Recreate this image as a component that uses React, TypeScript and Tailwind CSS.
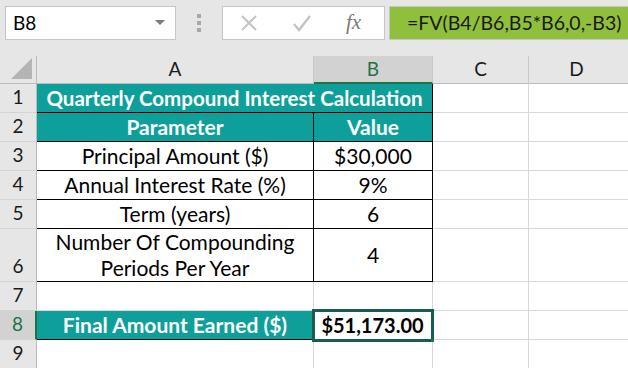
import React from "react";

const font = { fontFamily: "Lato, 'Open Sans', sans-serif" };

const rows = [
  { n: "1", h: "h-[29px]" },
  { n: "2", h: "h-[29px]" },
  { n: "3", h: "h-[29px]" },
  { n: "4", h: "h-[29px]" },
  { n: "5", h: "h-[29px]" },
  { n: "6", h: "h-[53px]" },
  { n: "7", h: "h-[29px]" },
  { n: "8", h: "h-[29px]" },
  { n: "9", h: "h-[29px]" },
];

const params = [
  { label: "Principal Amount ($)", value: "$30,000" },
  { label: "Annual Interest Rate (%)", value: "9%" },
  { label: "Term (years)", value: "6" },
];

function RowHead({ n, h, active }: { n: string; h: string; active?: boolean }) {
  return (
    <div
      className={`${h} w-[37px] shrink-0 flex items-end justify-center pb-[1px] border-b border-[#d4d4d4] text-[19px] ${
        active
          ? "bg-[#d2d2d2] border-r-2 border-r-[#217346] text-[#217346]"
          : "bg-[#e6e6e6] border-r border-r-[#bcbcbc] text-[#1a1a1a]"
      }`}
    >
      {n}
    </div>
  );
}

function Empty({ w }: { w: string }) {
  return <div className={`${w} shrink-0 border-r border-b border-[#d9d9d9]`} />;
}

export default function App() {
  return (
    <div className="w-[628px] h-[368px] overflow-hidden bg-white text-black" style={font}>
      {/* formula bar */}
      <div className="h-[56px] bg-[#e6e6e6] flex items-start pt-[6px] pl-[5px]">
        <div className="w-[171px] h-[34px] bg-white border border-[#c6c6c6] flex items-center pl-[7px] pr-[10px]">
          <span className="text-[19px] flex-1">B8</span>
          <svg width="10" height="6" viewBox="0 0 10 6">
            <path d="M0 0h10L5 5z" fill="#7a7a7a" />
          </svg>
        </div>
        <div className="w-[46px] h-[34px] flex flex-col items-center justify-center gap-[3px]">
          <span className="w-[4px] h-[4px] bg-[#a8a8a8]" />
          <span className="w-[4px] h-[4px] bg-[#a8a8a8]" />
          <span className="w-[4px] h-[4px] bg-[#a8a8a8]" />
        </div>
        <div className="w-[163px] h-[34px] bg-white border border-[#c6c6c6] flex items-center">
          <svg className="ml-[17px]" width="18" height="18" viewBox="0 0 18 18">
            <path d="M2 2l14 14M16 2L2 16" stroke="#c4c4c4" strokeWidth="2" />
          </svg>
          <svg className="ml-[34px]" width="20" height="18" viewBox="0 0 20 18">
            <path d="M2 10l5 6L18 2" stroke="#c4c4c4" strokeWidth="2.4" fill="none" />
          </svg>
          <span
            className="ml-[34px] text-[21px] italic text-[#7a7a7a]"
            style={{ fontFamily: "'Liberation Serif', serif" }}
          >
            fx
          </span>
        </div>
        <div className="ml-[4px] flex-1 h-[34px] bg-[#90bf3c] border border-[#c6c6c6] border-r-0 flex items-center pl-[17px] text-[19.5px] text-[#1a1a1a]">
          =FV(B4/B6,B5*B6,0,-B3)
        </div>
      </div>

      {/* column headers */}
      <div className="h-[28px] flex bg-[#e6e6e6] text-[19px] text-[#1a1a1a]">
        <div className="w-[37px] shrink-0 border-r border-b border-[#bcbcbc] flex items-end justify-end pr-[4px] pb-[4px]">
          <svg width="21" height="21" viewBox="0 0 21 21">
            <path d="M21 0V21H0z" fill="#b4b4b4" />
          </svg>
        </div>
        <div className="w-[277px] shrink-0 border-r border-[#c8c8c8] border-b border-b-[#bcbcbc] flex items-center justify-center">
          A
        </div>
        <div className="w-[119px] shrink-0 bg-[#d2d2d2] border-r border-[#c8c8c8] border-b-2 border-b-[#217346] flex items-center justify-center text-[#217346]">
          B
        </div>
        <div className="w-[96px] shrink-0 border-r border-[#c8c8c8] border-b border-b-[#bcbcbc] flex items-center justify-center">
          C
        </div>
        <div className="flex-1 border-b border-[#bcbcbc] flex items-center justify-center pr-[4px]">D</div>
      </div>

      {/* row 1 */}
      <div className="flex text-[21px]">
        <RowHead n="1" h={rows[0].h} />
        <div className="h-[29px] w-[396px] shrink-0 bg-[#0e9f9b] border-b border-r border-black flex items-center justify-center text-white font-bold text-[20.5px]">
          Quarterly Compound Interest Calculation
        </div>
        <Empty w="w-[96px]" />
        <div className="flex-1 border-b border-[#d9d9d9]" />
      </div>

      {/* row 2 */}
      <div className="flex text-[21px]">
        <RowHead n="2" h={rows[1].h} />
        <div className="h-[29px] w-[277px] shrink-0 bg-[#0e9f9b] border-b border-r border-black flex items-center justify-center text-white font-bold">
          Parameter
        </div>
        <div className="h-[29px] w-[119px] shrink-0 bg-[#0e9f9b] border-b border-r border-black flex items-center justify-center text-white font-bold">
          Value
        </div>
        <Empty w="w-[96px]" />
        <div className="flex-1 border-b border-[#d9d9d9]" />
      </div>

      {params.map((p, i) => (
        <div key={p.label} className="flex text-[21px]">
          <RowHead n={rows[i + 2].n} h={rows[i + 2].h} />
          <div className="h-[29px] w-[277px] shrink-0 border-b border-r border-black flex items-center justify-center">
            {p.label}
          </div>
          <div className="h-[29px] w-[119px] shrink-0 border-b border-r border-black flex items-center justify-center">
            {p.value}
          </div>
          <Empty w="w-[96px]" />
          <div className="flex-1 border-b border-[#d9d9d9]" />
        </div>
      ))}

      {/* row 6 */}
      <div className="flex text-[21px]">
        <RowHead n="6" h={rows[5].h} />
        <div className="h-[53px] w-[277px] shrink-0 border-b border-r border-black flex flex-col items-center justify-center leading-[26px]">
          <span>Number Of Compounding</span>
          <span>Periods Per Year</span>
        </div>
        <div className="h-[53px] w-[119px] shrink-0 border-b border-r border-black flex items-center justify-center">
          4
        </div>
        <Empty w="w-[96px]" />
        <div className="flex-1 border-b border-[#d9d9d9]" />
      </div>

      {/* row 7 */}
      <div className="flex text-[21px]">
        <RowHead n="7" h={rows[6].h} />
        <Empty w="w-[277px]" />
        <Empty w="w-[119px]" />
        <Empty w="w-[96px]" />
        <div className="flex-1 border-b border-[#d9d9d9]" />
      </div>

      {/* row 8 */}
      <div className="flex text-[21px]">
        <RowHead n="8" h={rows[7].h} active />
        <div className="h-[29px] w-[276px] shrink-0 bg-[#0e9f9b] border-b border-black flex items-center justify-center text-white font-bold">
          Final Amount Earned ($)
        </div>
        <div className="relative h-[29px] w-[120px] shrink-0 border-b border-r border-black flex items-center justify-center font-bold text-[20px]">
          $51,173.00
          <div className="absolute -top-[2px] -left-[1px] -right-[2px] -bottom-[3px] border-[3px] border-[#185c52]" />
          <div className="absolute -right-[2px] -bottom-[3px] w-[3px] h-[3px] bg-[#217346]" />
        </div>
        <Empty w="w-[96px]" />
        <div className="flex-1 border-b border-[#d9d9d9]" />
      </div>

      {/* row 9 */}
      <div className="flex text-[21px]">
        <RowHead n="9" h={rows[8].h} />
        <Empty w="w-[277px]" />
        <Empty w="w-[119px]" />
        <Empty w="w-[96px]" />
        <div className="flex-1 border-b border-[#d9d9d9]" />
      </div>
    </div>
  );
}
